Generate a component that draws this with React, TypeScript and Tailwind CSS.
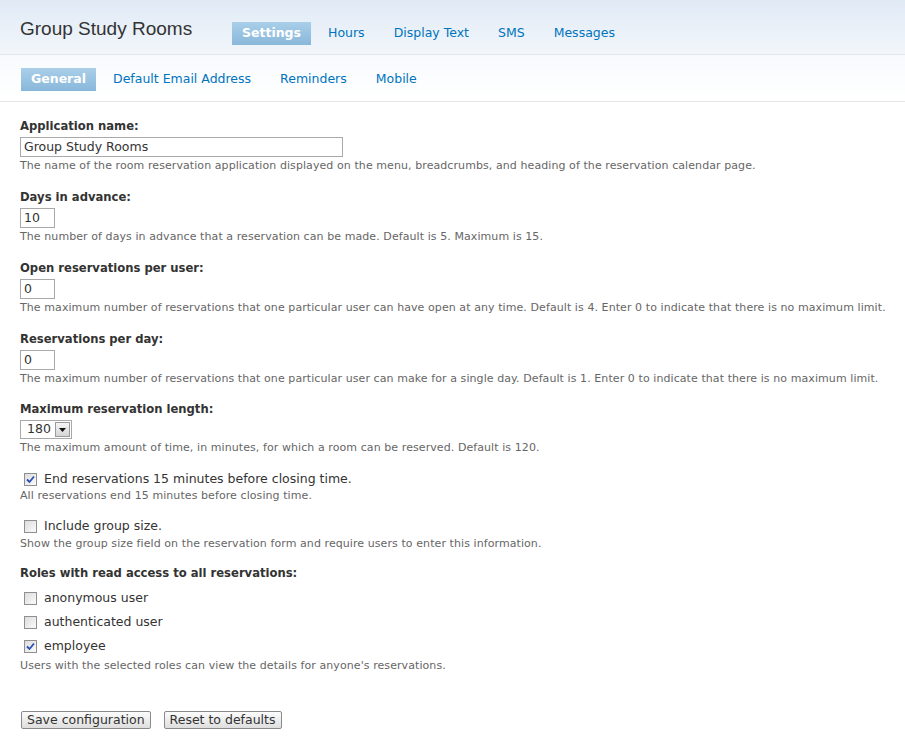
import React from 'react'

const primaryTabs = ['Settings', 'Hours', 'Display Text', 'SMS', 'Messages']
const secondaryTabs = ['General', 'Default Email Address', 'Reminders', 'Mobile']

const FONT = "font-['DejaVu_Sans',Verdana,sans-serif]"

function Tab({ label, active }: { label: string; active: boolean }) {
  if (active) {
    return (
      <span className="px-[10px] mr-[1px] h-[23px] flex items-center text-[12.5px] font-bold text-white bg-gradient-to-b from-[#a9cfe9] to-[#89b7da]">
        {label}
      </span>
    )
  }
  return <span className="px-[13px] h-[23px] flex items-center text-[12.5px] text-[#0074bd]">{label}</span>
}

function Label({ children }: { children: React.ReactNode }) {
  return <div className="text-[11.6px] font-bold text-[#333] leading-[16px]">{children}</div>
}

function Desc({ children, className = 'mt-[2px]' }: { children: React.ReactNode; className?: string }) {
  return (
    <div className={`text-[11px] tracking-[0.08px] whitespace-nowrap text-[#666] leading-[14px] ${className}`}>
      {children}
    </div>
  )
}

function TextInput({ value, width }: { value: string; width: string }) {
  return (
    <div
      className={`${width} h-[20px] mt-[3px] border border-[#a9a9a9] bg-white px-[3px] flex items-center text-[12.5px] text-[#333]`}
    >
      {value}
    </div>
  )
}

function Checkbox({ checked }: { checked: boolean }) {
  return (
    <span className="w-[13px] h-[13px] border border-[#8f8f8f] bg-gradient-to-br from-[#dcdcdc] to-[#fbfbfb] flex items-center justify-center shrink-0">
      {checked && (
        <svg width="9" height="9" viewBox="0 0 9 9">
          <path d="M1 4.5 L3.5 7 L8 1.5" stroke="#2a4fb5" strokeWidth="1.8" fill="none" />
        </svg>
      )}
    </span>
  )
}

function CheckRow({ label, checked }: { label: string; checked: boolean }) {
  return (
    <div className="flex items-center gap-[7px] pl-[4px] h-[18px] text-[12.5px] text-[#333]">
      <Checkbox checked={checked} />
      <span>{label}</span>
    </div>
  )
}

function Button({ children }: { children: React.ReactNode }) {
  return (
    <button className="h-[18px] px-[5px] border border-[#8a8a8a] rounded-[2px] bg-gradient-to-b from-[#fcfcfc] to-[#dedede] text-[12.5px] leading-[14px] text-[#333]">
      {children}
    </button>
  )
}

export default function App() {
  return (
    <div className={`w-[905px] h-[751px] bg-white ${FONT}`}>
      <div className="h-[55px] bg-gradient-to-b from-[#e0eaf5] to-[#f2f6fb] border-b border-[#e3e8ee] flex items-center pl-[20px] pt-[12px]">
        <h1 className="font-['Liberation_Sans',Arial,sans-serif] text-[19px] text-[#333] w-[212px] -mt-[7px]">
          Group Study Rooms
        </h1>
        <nav className="flex items-center gap-[3px]">
          {primaryTabs.map((t, i) => (
            <Tab key={t} label={t} active={i === 0} />
          ))}
        </nav>
      </div>
      <div className="h-[47px] bg-gradient-to-b from-[#f7fafd] to-white border-b border-[#e5e5e5] flex items-center pl-[21px]">
        <nav className="flex items-center gap-[3px] mt-[3px]">
          {secondaryTabs.map((t, i) => (
            <Tab key={t} label={t} active={i === 0} />
          ))}
        </nav>
      </div>

      <form className="px-[20px] pt-[16px]">
        <div className="mb-[16px]">
          <Label>Application name:</Label>
          <TextInput value="Group Study Rooms" width="w-[323px]" />
          <Desc>
            The name of the room reservation application displayed on the menu, breadcrumbs, and heading of the
            reservation calendar page.
          </Desc>
        </div>
        <div className="mb-[16px]">
          <Label>Days in advance:</Label>
          <TextInput value="10" width="w-[35px]" />
          <Desc>The number of days in advance that a reservation can be made. Default is 5. Maximum is 15.</Desc>
        </div>
        <div className="mb-[16px]">
          <Label>Open reservations per user:</Label>
          <TextInput value="0" width="w-[35px]" />
          <Desc>
            The maximum number of reservations that one particular user can have open at any time. Default is 4.
            Enter 0 to indicate that there is no maximum limit.
          </Desc>
        </div>
        <div className="mb-[15px]">
          <Label>Reservations per day:</Label>
          <TextInput value="0" width="w-[35px]" />
          <Desc>
            The maximum number of reservations that one particular user can make for a single day. Default is 1.
            Enter 0 to indicate that there is no maximum limit.
          </Desc>
        </div>
        <div className="mb-[15px]">
          <Label>Maximum reservation length:</Label>
          <div className="w-[52px] h-[19px] mt-[3px] border border-[#a9a9a9] bg-white flex items-center justify-between text-[12.5px] text-[#333] pl-[6px] pr-[1px]">
            <span>180</span>
            <span className="w-[15px] h-[15px] border border-[#9a9a9a] bg-gradient-to-b from-[#f5f5f5] to-[#d5d5d5] flex items-center justify-center">
              <svg width="7" height="4" viewBox="0 0 7 4">
                <path d="M0 0 H7 L3.5 4 Z" fill="#111" />
              </svg>
            </span>
          </div>
          <Desc>The maximum amount of time, in minutes, for which a room can be reserved. Default is 120.</Desc>
        </div>
        <div className="mb-[14px]">
          <CheckRow label="End reservations 15 minutes before closing time." checked />
          <Desc className="mt-[1px]">All reservations end 15 minutes before closing time.</Desc>
        </div>
        <div className="mb-[14px]">
          <CheckRow label="Include group size." checked={false} />
          <Desc className="mt-[2px]">
            Show the group size field on the reservation form and require users to enter this information.
          </Desc>
        </div>
        <div>
          <Label>Roles with read access to all reservations:</Label>
          <div className="flex flex-col gap-[6px] mt-[8px]">
            <CheckRow label="anonymous user" checked={false} />
            <CheckRow label="authenticated user" checked={false} />
            <CheckRow label="employee" checked />
          </div>
          <Desc className="mt-[4px]">Users with the selected roles can view the details for anyone's reservations.</Desc>
        </div>
        <div className="flex gap-[13px] mt-[38px] pl-[1px]">
          <Button>Save configuration</Button>
          <Button>Reset to defaults</Button>
        </div>
      </form>
    </div>
  )
}
